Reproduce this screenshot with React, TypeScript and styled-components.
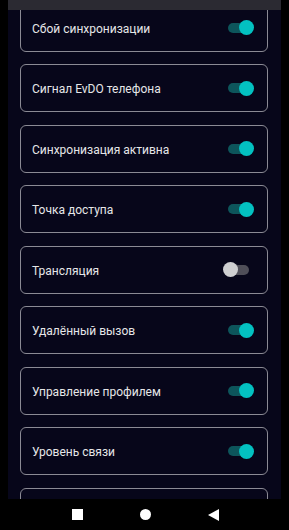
import React, { FC } from "react";
import styled, { createGlobalStyle } from "styled-components";

const GlobalStyle = createGlobalStyle`
  html, body {
    margin: 0;
    padding: 0;
    background: #000;
  }
  * {
    box-sizing: border-box;
  }
`;

const Phone = styled.div`
  width: 289px;
  height: 530px;
  display: flex;
  flex-direction: column;
  background: #000;
  font-family: Roboto, "Noto Sans", sans-serif;
`;

const Screen = styled.div`
  flex: 1;
  margin: 0 8px;
  display: flex;
  flex-direction: column;
  background: #07061a;
  overflow: hidden;
`;

const TopBar = styled.div`
  height: 10px;
  flex-shrink: 0;
  background: #2b2a32;
`;

const Viewport = styled.div`
  flex: 1;
  overflow: hidden;
`;

const List = styled.div<{ $offset: number }>`
  display: flex;
  flex-direction: column;
  gap: 12.5px;
  padding: 0 13px 0 12px;
  margin-top: ${(p) => -p.$offset}px;
`;

const Card = styled.div`
  height: 48px;
  flex-shrink: 0;
  display: flex;
  align-items: center;
  justify-content: space-between;
  padding: 0 13px 0 11px;
  border: 1px solid #8b8a94;
  border-radius: 6px;
`;

const Label = styled.span`
  font-size: 12px;
  line-height: 14px;
  padding-top: 2px;
  color: #e6e6e8;
`;

const Switch = styled.div<{ $on: boolean }>`
  position: relative;
  width: 31px;
  height: 15px;
  flex-shrink: 0;
  margin-left: auto;
  &::before {
    content: "";
    position: absolute;
    left: 5px;
    right: 5px;
    top: 2.5px;
    height: 10px;
    border-radius: 5px;
    background: ${(p) => (p.$on ? "#0d555b" : "#4f4e58")};
  }
  &::after {
    content: "";
    position: absolute;
    top: 0;
    left: ${(p) => (p.$on ? "16px" : "0")};
    width: 15px;
    height: 15px;
    border-radius: 50%;
    background: ${(p) => (p.$on ? "#03c1c1" : "#cfcfd1")};
  }
`;

const NavBar = styled.div`
  height: 31px;
  flex-shrink: 0;
  display: flex;
  align-items: center;
  justify-content: center;
  gap: 57px;
  padding-left: 1px;
`;

const NavSquare = styled.div`
  width: 11px;
  height: 11px;
  background: #fff;
`;

const NavCircle = styled.div`
  width: 11px;
  height: 11px;
  border-radius: 50%;
  background: #fff;
`;

const NavBack = styled.div`
  width: 0;
  height: 0;
  border-top: 6px solid transparent;
  border-bottom: 6px solid transparent;
  border-right: 11px solid #fff;
`;

// the last item sits below the fold, only its top border shows
const items: { label?: string; on: boolean }[] = [
  { label: "Сбой синхронизации", on: true },
  { label: "Сигнал EvDO телефона", on: true },
  { label: "Синхронизация активна", on: true },
  { label: "Точка доступа", on: true },
  { label: "Трансляция", on: false },
  { label: "Удалённый вызов", on: true },
  { label: "Управление профилем", on: true },
  { label: "Уровень связи", on: true },
  { on: true },
];

const App: FC = () => {
  return (
    <>
      <GlobalStyle />
      <Phone>
        <Screen>
          <TopBar />
          <Viewport>
            <List $offset={6.5}>
              {items.map((item, i) => (
                <Card key={i}>
                  {item.label && <Label>{item.label}</Label>}
                  <Switch $on={item.on} />
                </Card>
              ))}
            </List>
          </Viewport>
        </Screen>
        <NavBar>
          <NavSquare />
          <NavCircle />
          <NavBack />
        </NavBar>
      </Phone>
    </>
  );
};

export default App;
